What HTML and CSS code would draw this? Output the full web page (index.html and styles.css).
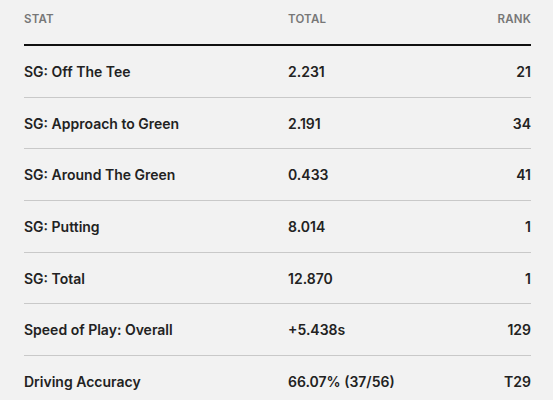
FILE: index.html
```html
<!DOCTYPE html>
<html lang="en">
<head>
  <meta charset="UTF-8">
  <title>Stats</title>
  <link rel="stylesheet" href="styles.css">
</head>
<body>

<div class="stats">
  <div class="row head">
    <div>STAT</div>
    <div>TOTAL</div>
    <div class="rank">RANK</div>
  </div>
  <div class="row">
    <div>SG: Off The Tee</div>
    <div>2.231</div>
    <div class="rank">21</div>
  </div>
  <div class="row">
    <div>SG: Approach to Green</div>
    <div>2.191</div>
    <div class="rank">34</div>
  </div>
  <div class="row">
    <div>SG: Around The Green</div>
    <div>0.433</div>
    <div class="rank">41</div>
  </div>
  <div class="row">
    <div>SG: Putting</div>
    <div>8.014</div>
    <div class="rank">1</div>
  </div>
  <div class="row">
    <div>SG: Total</div>
    <div>12.870</div>
    <div class="rank">1</div>
  </div>
  <div class="row">
    <div>Speed of Play: Overall</div>
    <div>+5.438s</div>
    <div class="rank">129</div>
  </div>
  <div class="row">
    <div>Driving Accuracy</div>
    <div>66.07% (37/56)</div>
    <div class="rank">T29</div>
  </div>
</div>

</body>
</html>
```

FILE: styles.css
```css
* {
  margin: 0;
  padding: 0;
  box-sizing: border-box;
}

body {
  background-color: #f2f2f2;
  font-family: Inter, "Liberation Sans", sans-serif;
  color: #222;
}

.stats {
  padding: 0 22px 0 24px;
}

.row {
  display: grid;
  grid-template-columns: 264px 1fr auto;
  align-items: center;
  height: 51.7px;
  border-bottom: 1px solid #c9c9c9;
  font-size: 14px;
  font-weight: 600;
}

.row:last-child {
  border-bottom: none;
}

.head {
  height: 46px;
  padding-bottom: 7px;
  border-bottom: 2px solid #111;
  font-size: 11.5px;
  letter-spacing: 0.2px;
  color: #777;
}

.rank {
  text-align: right;
}
```
